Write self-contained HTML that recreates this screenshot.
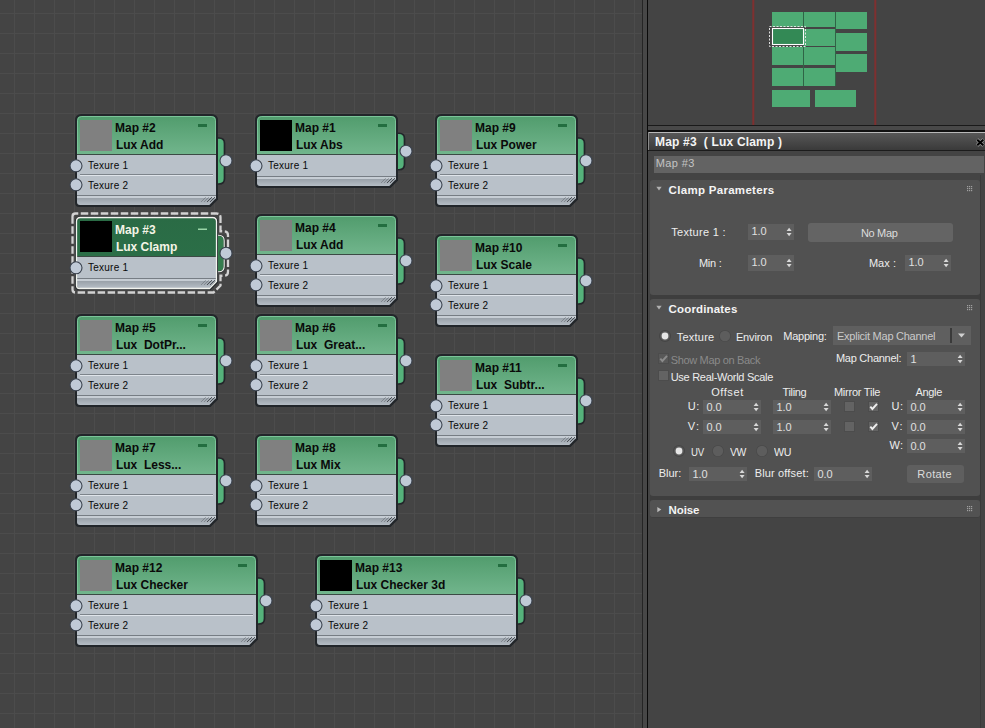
<!DOCTYPE html>
<html><head><meta charset="utf-8"><style>
*{margin:0;padding:0;box-sizing:border-box}
html,body{width:985px;height:728px;overflow:hidden;background:#444444;font-family:"Liberation Sans", sans-serif}
.a{position:absolute}
.sp{position:absolute;background:#5e5e5e;height:14px}
.rh{position:absolute;left:650px;width:330px;height:18px}
</style></head>
<body>
<svg class="a" style="left:0;top:0" width="642" height="728"><rect x="14" y="0" width="1" height="728" fill="#4c4c4c"/><rect x="34" y="0" width="1" height="728" fill="#4c4c4c"/><rect x="54" y="0" width="1" height="728" fill="#4c4c4c"/><rect x="74" y="0" width="1" height="728" fill="#4c4c4c"/><rect x="94" y="0" width="1" height="728" fill="#4c4c4c"/><rect x="114" y="0" width="1" height="728" fill="#4c4c4c"/><rect x="134" y="0" width="1" height="728" fill="#4c4c4c"/><rect x="154" y="0" width="1" height="728" fill="#4c4c4c"/><rect x="174" y="0" width="1" height="728" fill="#4c4c4c"/><rect x="194" y="0" width="1" height="728" fill="#4c4c4c"/><rect x="214" y="0" width="1" height="728" fill="#4c4c4c"/><rect x="234" y="0" width="1" height="728" fill="#4c4c4c"/><rect x="254" y="0" width="1" height="728" fill="#4c4c4c"/><rect x="274" y="0" width="1" height="728" fill="#4c4c4c"/><rect x="294" y="0" width="1" height="728" fill="#4c4c4c"/><rect x="314" y="0" width="1" height="728" fill="#4c4c4c"/><rect x="334" y="0" width="1" height="728" fill="#4c4c4c"/><rect x="354" y="0" width="1" height="728" fill="#4c4c4c"/><rect x="374" y="0" width="1" height="728" fill="#4c4c4c"/><rect x="394" y="0" width="1" height="728" fill="#4c4c4c"/><rect x="414" y="0" width="1" height="728" fill="#4c4c4c"/><rect x="434" y="0" width="1" height="728" fill="#4c4c4c"/><rect x="454" y="0" width="1" height="728" fill="#4c4c4c"/><rect x="474" y="0" width="1" height="728" fill="#4c4c4c"/><rect x="494" y="0" width="1" height="728" fill="#4c4c4c"/><rect x="514" y="0" width="1" height="728" fill="#4c4c4c"/><rect x="534" y="0" width="1" height="728" fill="#4c4c4c"/><rect x="554" y="0" width="1" height="728" fill="#4c4c4c"/><rect x="574" y="0" width="1" height="728" fill="#4c4c4c"/><rect x="594" y="0" width="1" height="728" fill="#4c4c4c"/><rect x="614" y="0" width="1" height="728" fill="#4c4c4c"/><rect x="634" y="0" width="1" height="728" fill="#4c4c4c"/><rect x="0" y="13" width="642" height="1" fill="#4c4c4c"/><rect x="0" y="33" width="642" height="1" fill="#4c4c4c"/><rect x="0" y="53" width="642" height="1" fill="#4c4c4c"/><rect x="0" y="73" width="642" height="1" fill="#4c4c4c"/><rect x="0" y="93" width="642" height="1" fill="#4c4c4c"/><rect x="0" y="113" width="642" height="1" fill="#4c4c4c"/><rect x="0" y="133" width="642" height="1" fill="#4c4c4c"/><rect x="0" y="153" width="642" height="1" fill="#4c4c4c"/><rect x="0" y="173" width="642" height="1" fill="#4c4c4c"/><rect x="0" y="193" width="642" height="1" fill="#4c4c4c"/><rect x="0" y="213" width="642" height="1" fill="#4c4c4c"/><rect x="0" y="233" width="642" height="1" fill="#4c4c4c"/><rect x="0" y="253" width="642" height="1" fill="#4c4c4c"/><rect x="0" y="273" width="642" height="1" fill="#4c4c4c"/><rect x="0" y="293" width="642" height="1" fill="#4c4c4c"/><rect x="0" y="313" width="642" height="1" fill="#4c4c4c"/><rect x="0" y="333" width="642" height="1" fill="#4c4c4c"/><rect x="0" y="353" width="642" height="1" fill="#4c4c4c"/><rect x="0" y="373" width="642" height="1" fill="#4c4c4c"/><rect x="0" y="393" width="642" height="1" fill="#4c4c4c"/><rect x="0" y="413" width="642" height="1" fill="#4c4c4c"/><rect x="0" y="433" width="642" height="1" fill="#4c4c4c"/><rect x="0" y="453" width="642" height="1" fill="#4c4c4c"/><rect x="0" y="473" width="642" height="1" fill="#4c4c4c"/><rect x="0" y="493" width="642" height="1" fill="#4c4c4c"/><rect x="0" y="513" width="642" height="1" fill="#4c4c4c"/><rect x="0" y="533" width="642" height="1" fill="#4c4c4c"/><rect x="0" y="553" width="642" height="1" fill="#4c4c4c"/><rect x="0" y="573" width="642" height="1" fill="#4c4c4c"/><rect x="0" y="593" width="642" height="1" fill="#4c4c4c"/><rect x="0" y="613" width="642" height="1" fill="#4c4c4c"/><rect x="0" y="633" width="642" height="1" fill="#4c4c4c"/><rect x="0" y="653" width="642" height="1" fill="#4c4c4c"/><rect x="0" y="673" width="642" height="1" fill="#4c4c4c"/><rect x="0" y="693" width="642" height="1" fill="#4c4c4c"/><rect x="0" y="713" width="642" height="1" fill="#4c4c4c"/></svg><svg style="position:absolute;left:65px;top:104px" width="177" height="113"><path d="M150,34.0 L154,34.0 Q159.5,34.0 159.5,39.5 L159.5,74.5 Q159.5,80.0 154,80.0 L150,80.0 Z" fill="#55b27b" stroke="#22262a" stroke-width="1.7"/><defs><clipPath id="c75_114"><path d="M12,16.5 Q12,12 16.5,12 L146.5,12 Q151,12 151,16.5 L151,94.3 L144.3,101 L15,101 Q12,101 12,98 Z"/></clipPath><linearGradient id="gc75_114" x1="0" y1="0" x2="0" y2="1"><stop offset="0" stop-color="#519c6d"/><stop offset="1" stop-color="#71b58c"/></linearGradient><linearGradient id="fc75_114" x1="0" y1="0" x2="0" y2="1"><stop offset="0" stop-color="#99a1a9"/><stop offset="1" stop-color="#b5bdc5"/></linearGradient></defs><path d="M10,16.5 Q10,10 16.5,10 L146.5,10 Q153,10 153,16.5 L153,95.5 L145.5,103 L14.5,103 Q10,103 10,98.5 Z" fill="#22262a"/><g clip-path="url(#c75_114)"><rect x="12" y="12" width="139" height="38" fill="url(#gc75_114)"/><path d="M12.5,50 L12.5,16.5 Q12.5,12.5 16.5,12.5 L146.5,12.5 Q150.5,12.5 150.5,16.5 L150.5,50" fill="none" stroke="#7bc499" stroke-width="1"/><rect x="12" y="50" width="139" height="1" fill="#3b4a44"/><rect x="12" y="51" width="139" height="41" fill="#b9c1c9"/><rect x="15" y="70" width="133" height="1" fill="#7d848b"/><rect x="15" y="71" width="133" height="1" fill="#dfe4ea"/><rect x="12" y="91" width="139" height="1" fill="#767d84"/><rect x="12" y="92" width="139" height="2" fill="#c6cdd4"/><rect x="12" y="94" width="139" height="7" fill="url(#fc75_114)"/></g><line x1="136" y1="98" x2="141" y2="93" stroke="#1c1f22" stroke-width="1" stroke-dasharray="1 0.5" opacity="0.35"/><line x1="139" y1="98" x2="144" y2="93" stroke="#1c1f22" stroke-width="1" stroke-dasharray="1 0.5" opacity="0.35"/><line x1="142" y1="98" x2="147" y2="93" stroke="#1c1f22" stroke-width="1" stroke-dasharray="1 0.5" opacity="0.9"/><line x1="145" y1="98" x2="150" y2="93" stroke="#1c1f22" stroke-width="1" stroke-dasharray="1 0.5" opacity="0.9"/><rect x="15" y="16" width="32" height="31" fill="#808080"/><rect x="133" y="20" width="9" height="3" fill="#236e40"/><circle cx="11" cy="61.8" r="6" fill="#c0cad7" stroke="#3a424e" stroke-width="1.1"/><circle cx="11" cy="80.8" r="6" fill="#c0cad7" stroke="#3a424e" stroke-width="1.1"/><circle cx="161" cy="56.7" r="6" fill="#c0cad7" stroke="#3a424e" stroke-width="1.1"/></svg><div class="a" style="left:115.00px;top:122px;font-size:12px;font-weight:bold;color:#0a0a0a;line-height:12px;white-space:pre;letter-spacing:0.000px;">Map #2</div><div class="a" style="left:115.90px;top:139px;font-size:12px;font-weight:bold;color:#0a0a0a;line-height:12px;white-space:pre;letter-spacing:0.000px;">Lux Add</div><div class="a" style="left:88.10px;top:160px;font-size:10px;font-weight:normal;color:#080808;line-height:12px;white-space:pre;letter-spacing:0.221px;">Texure 1</div><div class="a" style="left:88.10px;top:180px;font-size:10px;font-weight:normal;color:#080808;line-height:12px;white-space:pre;letter-spacing:0.221px;">Texure 2</div><svg style="position:absolute;left:245px;top:104px" width="177" height="94"><path d="M150,29.25 L154,29.25 Q159.5,29.25 159.5,34.75 L159.5,60.25 Q159.5,65.75 154,65.75 L150,65.75 Z" fill="#55b27b" stroke="#22262a" stroke-width="1.7"/><defs><clipPath id="c255_114"><path d="M12,16.5 Q12,12 16.5,12 L146.5,12 Q151,12 151,16.5 L151,75.3 L144.3,82 L15,82 Q12,82 12,79 Z"/></clipPath><linearGradient id="gc255_114" x1="0" y1="0" x2="0" y2="1"><stop offset="0" stop-color="#519c6d"/><stop offset="1" stop-color="#71b58c"/></linearGradient><linearGradient id="fc255_114" x1="0" y1="0" x2="0" y2="1"><stop offset="0" stop-color="#99a1a9"/><stop offset="1" stop-color="#b5bdc5"/></linearGradient></defs><path d="M10,16.5 Q10,10 16.5,10 L146.5,10 Q153,10 153,16.5 L153,76.5 L145.5,84 L14.5,84 Q10,84 10,79.5 Z" fill="#22262a"/><g clip-path="url(#c255_114)"><rect x="12" y="12" width="139" height="38" fill="url(#gc255_114)"/><path d="M12.5,50 L12.5,16.5 Q12.5,12.5 16.5,12.5 L146.5,12.5 Q150.5,12.5 150.5,16.5 L150.5,50" fill="none" stroke="#7bc499" stroke-width="1"/><rect x="12" y="50" width="139" height="1" fill="#3b4a44"/><rect x="12" y="51" width="139" height="21" fill="#b9c1c9"/><rect x="12" y="72" width="139" height="1" fill="#767d84"/><rect x="12" y="73" width="139" height="2" fill="#c6cdd4"/><rect x="12" y="75" width="139" height="7" fill="url(#fc255_114)"/></g><line x1="136" y1="79" x2="141" y2="74" stroke="#1c1f22" stroke-width="1" stroke-dasharray="1 0.5" opacity="0.35"/><line x1="139" y1="79" x2="144" y2="74" stroke="#1c1f22" stroke-width="1" stroke-dasharray="1 0.5" opacity="0.35"/><line x1="142" y1="79" x2="147" y2="74" stroke="#1c1f22" stroke-width="1" stroke-dasharray="1 0.5" opacity="0.9"/><line x1="145" y1="79" x2="150" y2="74" stroke="#1c1f22" stroke-width="1" stroke-dasharray="1 0.5" opacity="0.9"/><rect x="15" y="16" width="32" height="31" fill="#000000"/><rect x="133" y="20" width="9" height="3" fill="#236e40"/><circle cx="11" cy="61.8" r="6" fill="#c0cad7" stroke="#3a424e" stroke-width="1.1"/><circle cx="161" cy="47.2" r="6" fill="#c0cad7" stroke="#3a424e" stroke-width="1.1"/></svg><div class="a" style="left:295.00px;top:122px;font-size:12px;font-weight:bold;color:#0a0a0a;line-height:12px;white-space:pre;letter-spacing:0.000px;">Map #1</div><div class="a" style="left:295.90px;top:139px;font-size:12px;font-weight:bold;color:#0a0a0a;line-height:12px;white-space:pre;letter-spacing:0.000px;">Lux Abs</div><div class="a" style="left:268.10px;top:160px;font-size:10px;font-weight:normal;color:#080808;line-height:12px;white-space:pre;letter-spacing:0.221px;">Texure 1</div><svg style="position:absolute;left:425px;top:104px" width="177" height="113"><path d="M150,34.0 L154,34.0 Q159.5,34.0 159.5,39.5 L159.5,74.5 Q159.5,80.0 154,80.0 L150,80.0 Z" fill="#55b27b" stroke="#22262a" stroke-width="1.7"/><defs><clipPath id="c435_114"><path d="M12,16.5 Q12,12 16.5,12 L146.5,12 Q151,12 151,16.5 L151,94.3 L144.3,101 L15,101 Q12,101 12,98 Z"/></clipPath><linearGradient id="gc435_114" x1="0" y1="0" x2="0" y2="1"><stop offset="0" stop-color="#519c6d"/><stop offset="1" stop-color="#71b58c"/></linearGradient><linearGradient id="fc435_114" x1="0" y1="0" x2="0" y2="1"><stop offset="0" stop-color="#99a1a9"/><stop offset="1" stop-color="#b5bdc5"/></linearGradient></defs><path d="M10,16.5 Q10,10 16.5,10 L146.5,10 Q153,10 153,16.5 L153,95.5 L145.5,103 L14.5,103 Q10,103 10,98.5 Z" fill="#22262a"/><g clip-path="url(#c435_114)"><rect x="12" y="12" width="139" height="38" fill="url(#gc435_114)"/><path d="M12.5,50 L12.5,16.5 Q12.5,12.5 16.5,12.5 L146.5,12.5 Q150.5,12.5 150.5,16.5 L150.5,50" fill="none" stroke="#7bc499" stroke-width="1"/><rect x="12" y="50" width="139" height="1" fill="#3b4a44"/><rect x="12" y="51" width="139" height="41" fill="#b9c1c9"/><rect x="15" y="70" width="133" height="1" fill="#7d848b"/><rect x="15" y="71" width="133" height="1" fill="#dfe4ea"/><rect x="12" y="91" width="139" height="1" fill="#767d84"/><rect x="12" y="92" width="139" height="2" fill="#c6cdd4"/><rect x="12" y="94" width="139" height="7" fill="url(#fc435_114)"/></g><line x1="136" y1="98" x2="141" y2="93" stroke="#1c1f22" stroke-width="1" stroke-dasharray="1 0.5" opacity="0.35"/><line x1="139" y1="98" x2="144" y2="93" stroke="#1c1f22" stroke-width="1" stroke-dasharray="1 0.5" opacity="0.35"/><line x1="142" y1="98" x2="147" y2="93" stroke="#1c1f22" stroke-width="1" stroke-dasharray="1 0.5" opacity="0.9"/><line x1="145" y1="98" x2="150" y2="93" stroke="#1c1f22" stroke-width="1" stroke-dasharray="1 0.5" opacity="0.9"/><rect x="15" y="16" width="32" height="31" fill="#808080"/><rect x="133" y="20" width="9" height="3" fill="#236e40"/><circle cx="11" cy="61.8" r="6" fill="#c0cad7" stroke="#3a424e" stroke-width="1.1"/><circle cx="11" cy="80.8" r="6" fill="#c0cad7" stroke="#3a424e" stroke-width="1.1"/><circle cx="161" cy="56.7" r="6" fill="#c0cad7" stroke="#3a424e" stroke-width="1.1"/></svg><div class="a" style="left:475.00px;top:122px;font-size:12px;font-weight:bold;color:#0a0a0a;line-height:12px;white-space:pre;letter-spacing:0.000px;">Map #9</div><div class="a" style="left:475.90px;top:139px;font-size:12px;font-weight:bold;color:#0a0a0a;line-height:12px;white-space:pre;letter-spacing:0.000px;">Lux Power</div><div class="a" style="left:448.10px;top:160px;font-size:10px;font-weight:normal;color:#080808;line-height:12px;white-space:pre;letter-spacing:0.221px;">Texure 1</div><div class="a" style="left:448.10px;top:180px;font-size:10px;font-weight:normal;color:#080808;line-height:12px;white-space:pre;letter-spacing:0.221px;">Texure 2</div><svg style="position:absolute;left:65px;top:206px" width="177" height="94"><path d="M7.5,10.5 Q7.5,7.5 10.5,7.5 L151.5,7.5 Q155.5,7.5 155.5,11.5 L155.5,25.25 L159,25.25 Q163,25.25 163,29.25 L163,65.75 Q163,69.75 159,69.75 L155.5,69.75 L155.5,79.5 L148.5,86.5 L10.5,86.5 Q7.5,86.5 7.5,83.5 Z" fill="none" stroke="#d2d2d2" stroke-width="2.3" stroke-dasharray="7.5 2.5"/><path d="M150,29.25 L154,29.25 Q159.5,29.25 159.5,34.75 L159.5,60.25 Q159.5,65.75 154,65.75 L150,65.75 Z" fill="#357d4e" stroke="#22262a" stroke-width="1.7"/><path d="M150,29.25 L154,29.25 Q159.5,29.25 159.5,34.75 L159.5,60.25 Q159.5,65.75 154,65.75 L150,65.75 Z" fill="none" stroke="#eef2ec" stroke-width="1.1" transform="translate(-0.3,0)"/><defs><clipPath id="c75_216"><path d="M12,16.5 Q12,12 16.5,12 L146.5,12 Q151,12 151,16.5 L151,75.3 L144.3,82 L15,82 Q12,82 12,79 Z"/></clipPath><linearGradient id="gc75_216" x1="0" y1="0" x2="0" y2="1"><stop offset="0" stop-color="#2a6b45"/><stop offset="1" stop-color="#2b6e47"/></linearGradient><linearGradient id="fc75_216" x1="0" y1="0" x2="0" y2="1"><stop offset="0" stop-color="#99a1a9"/><stop offset="1" stop-color="#b5bdc5"/></linearGradient></defs><path d="M10,16.5 Q10,10 16.5,10 L146.5,10 Q153,10 153,16.5 L153,76.5 L145.5,84 L14.5,84 Q10,84 10,79.5 Z" fill="#22262a"/><g clip-path="url(#c75_216)"><rect x="12" y="12" width="139" height="38" fill="url(#gc75_216)"/><rect x="12" y="50" width="139" height="1" fill="#3b4a44"/><rect x="12" y="51" width="139" height="21" fill="#b9c1c9"/><rect x="12" y="72" width="139" height="1" fill="#767d84"/><rect x="12" y="73" width="139" height="2" fill="#c6cdd4"/><rect x="12" y="75" width="139" height="7" fill="url(#fc75_216)"/></g><path d="M11.5,15.5 Q11.5,11.5 15.5,11.5 L147.5,11.5 Q151.5,11.5 151.5,15.5 L151.5,75.5 L144.5,82.5 L14.5,82.5 Q11.5,82.5 11.5,79.5 Z" fill="none" stroke="#f2f4ef" stroke-width="1.3"/><line x1="136" y1="79" x2="141" y2="74" stroke="#1c1f22" stroke-width="1" stroke-dasharray="1 0.5" opacity="0.35"/><line x1="139" y1="79" x2="144" y2="74" stroke="#1c1f22" stroke-width="1" stroke-dasharray="1 0.5" opacity="0.35"/><line x1="142" y1="79" x2="147" y2="74" stroke="#1c1f22" stroke-width="1" stroke-dasharray="1 0.5" opacity="0.9"/><line x1="145" y1="79" x2="150" y2="74" stroke="#1c1f22" stroke-width="1" stroke-dasharray="1 0.5" opacity="0.9"/><rect x="15" y="15" width="32" height="31" fill="#000000"/><rect x="133" y="22.5" width="9" height="1.5" fill="#9ad6a8"/><circle cx="11" cy="61.8" r="6" fill="#c0cad7" stroke="#3a424e" stroke-width="1.1"/><circle cx="161" cy="47.2" r="6" fill="#c0cad7" stroke="#3a424e" stroke-width="1.1"/></svg><div class="a" style="left:115.00px;top:224px;font-size:12px;font-weight:bold;color:#f4f4e6;line-height:12px;white-space:pre;letter-spacing:0.000px;">Map #3</div><div class="a" style="left:115.90px;top:241px;font-size:12px;font-weight:bold;color:#f4f4e6;line-height:12px;white-space:pre;letter-spacing:0.000px;">Lux Clamp</div><div class="a" style="left:88.10px;top:262px;font-size:10px;font-weight:normal;color:#080808;line-height:12px;white-space:pre;letter-spacing:0.221px;">Texure 1</div><svg style="position:absolute;left:245px;top:204px" width="177" height="113"><path d="M150,34.0 L154,34.0 Q159.5,34.0 159.5,39.5 L159.5,74.5 Q159.5,80.0 154,80.0 L150,80.0 Z" fill="#55b27b" stroke="#22262a" stroke-width="1.7"/><defs><clipPath id="c255_214"><path d="M12,16.5 Q12,12 16.5,12 L146.5,12 Q151,12 151,16.5 L151,94.3 L144.3,101 L15,101 Q12,101 12,98 Z"/></clipPath><linearGradient id="gc255_214" x1="0" y1="0" x2="0" y2="1"><stop offset="0" stop-color="#519c6d"/><stop offset="1" stop-color="#71b58c"/></linearGradient><linearGradient id="fc255_214" x1="0" y1="0" x2="0" y2="1"><stop offset="0" stop-color="#99a1a9"/><stop offset="1" stop-color="#b5bdc5"/></linearGradient></defs><path d="M10,16.5 Q10,10 16.5,10 L146.5,10 Q153,10 153,16.5 L153,95.5 L145.5,103 L14.5,103 Q10,103 10,98.5 Z" fill="#22262a"/><g clip-path="url(#c255_214)"><rect x="12" y="12" width="139" height="38" fill="url(#gc255_214)"/><path d="M12.5,50 L12.5,16.5 Q12.5,12.5 16.5,12.5 L146.5,12.5 Q150.5,12.5 150.5,16.5 L150.5,50" fill="none" stroke="#7bc499" stroke-width="1"/><rect x="12" y="50" width="139" height="1" fill="#3b4a44"/><rect x="12" y="51" width="139" height="41" fill="#b9c1c9"/><rect x="15" y="70" width="133" height="1" fill="#7d848b"/><rect x="15" y="71" width="133" height="1" fill="#dfe4ea"/><rect x="12" y="91" width="139" height="1" fill="#767d84"/><rect x="12" y="92" width="139" height="2" fill="#c6cdd4"/><rect x="12" y="94" width="139" height="7" fill="url(#fc255_214)"/></g><line x1="136" y1="98" x2="141" y2="93" stroke="#1c1f22" stroke-width="1" stroke-dasharray="1 0.5" opacity="0.35"/><line x1="139" y1="98" x2="144" y2="93" stroke="#1c1f22" stroke-width="1" stroke-dasharray="1 0.5" opacity="0.35"/><line x1="142" y1="98" x2="147" y2="93" stroke="#1c1f22" stroke-width="1" stroke-dasharray="1 0.5" opacity="0.9"/><line x1="145" y1="98" x2="150" y2="93" stroke="#1c1f22" stroke-width="1" stroke-dasharray="1 0.5" opacity="0.9"/><rect x="15" y="16" width="32" height="31" fill="#808080"/><rect x="133" y="20" width="9" height="3" fill="#236e40"/><circle cx="11" cy="61.8" r="6" fill="#c0cad7" stroke="#3a424e" stroke-width="1.1"/><circle cx="11" cy="80.8" r="6" fill="#c0cad7" stroke="#3a424e" stroke-width="1.1"/><circle cx="161" cy="56.7" r="6" fill="#c0cad7" stroke="#3a424e" stroke-width="1.1"/></svg><div class="a" style="left:295.00px;top:222px;font-size:12px;font-weight:bold;color:#0a0a0a;line-height:12px;white-space:pre;letter-spacing:0.000px;">Map #4</div><div class="a" style="left:295.90px;top:239px;font-size:12px;font-weight:bold;color:#0a0a0a;line-height:12px;white-space:pre;letter-spacing:0.000px;">Lux Add</div><div class="a" style="left:268.10px;top:260px;font-size:10px;font-weight:normal;color:#080808;line-height:12px;white-space:pre;letter-spacing:0.221px;">Texure 1</div><div class="a" style="left:268.10px;top:280px;font-size:10px;font-weight:normal;color:#080808;line-height:12px;white-space:pre;letter-spacing:0.221px;">Texure 2</div><svg style="position:absolute;left:425px;top:224px" width="177" height="113"><path d="M150,34.0 L154,34.0 Q159.5,34.0 159.5,39.5 L159.5,74.5 Q159.5,80.0 154,80.0 L150,80.0 Z" fill="#55b27b" stroke="#22262a" stroke-width="1.7"/><defs><clipPath id="c435_234"><path d="M12,16.5 Q12,12 16.5,12 L146.5,12 Q151,12 151,16.5 L151,94.3 L144.3,101 L15,101 Q12,101 12,98 Z"/></clipPath><linearGradient id="gc435_234" x1="0" y1="0" x2="0" y2="1"><stop offset="0" stop-color="#519c6d"/><stop offset="1" stop-color="#71b58c"/></linearGradient><linearGradient id="fc435_234" x1="0" y1="0" x2="0" y2="1"><stop offset="0" stop-color="#99a1a9"/><stop offset="1" stop-color="#b5bdc5"/></linearGradient></defs><path d="M10,16.5 Q10,10 16.5,10 L146.5,10 Q153,10 153,16.5 L153,95.5 L145.5,103 L14.5,103 Q10,103 10,98.5 Z" fill="#22262a"/><g clip-path="url(#c435_234)"><rect x="12" y="12" width="139" height="38" fill="url(#gc435_234)"/><path d="M12.5,50 L12.5,16.5 Q12.5,12.5 16.5,12.5 L146.5,12.5 Q150.5,12.5 150.5,16.5 L150.5,50" fill="none" stroke="#7bc499" stroke-width="1"/><rect x="12" y="50" width="139" height="1" fill="#3b4a44"/><rect x="12" y="51" width="139" height="41" fill="#b9c1c9"/><rect x="15" y="70" width="133" height="1" fill="#7d848b"/><rect x="15" y="71" width="133" height="1" fill="#dfe4ea"/><rect x="12" y="91" width="139" height="1" fill="#767d84"/><rect x="12" y="92" width="139" height="2" fill="#c6cdd4"/><rect x="12" y="94" width="139" height="7" fill="url(#fc435_234)"/></g><line x1="136" y1="98" x2="141" y2="93" stroke="#1c1f22" stroke-width="1" stroke-dasharray="1 0.5" opacity="0.35"/><line x1="139" y1="98" x2="144" y2="93" stroke="#1c1f22" stroke-width="1" stroke-dasharray="1 0.5" opacity="0.35"/><line x1="142" y1="98" x2="147" y2="93" stroke="#1c1f22" stroke-width="1" stroke-dasharray="1 0.5" opacity="0.9"/><line x1="145" y1="98" x2="150" y2="93" stroke="#1c1f22" stroke-width="1" stroke-dasharray="1 0.5" opacity="0.9"/><rect x="15" y="16" width="32" height="31" fill="#808080"/><rect x="133" y="20" width="9" height="3" fill="#236e40"/><circle cx="11" cy="61.8" r="6" fill="#c0cad7" stroke="#3a424e" stroke-width="1.1"/><circle cx="11" cy="80.8" r="6" fill="#c0cad7" stroke="#3a424e" stroke-width="1.1"/><circle cx="161" cy="56.7" r="6" fill="#c0cad7" stroke="#3a424e" stroke-width="1.1"/></svg><div class="a" style="left:475.00px;top:242px;font-size:12px;font-weight:bold;color:#0a0a0a;line-height:12px;white-space:pre;letter-spacing:0.000px;">Map #10</div><div class="a" style="left:475.90px;top:259px;font-size:12px;font-weight:bold;color:#0a0a0a;line-height:12px;white-space:pre;letter-spacing:0.000px;">Lux Scale</div><div class="a" style="left:448.10px;top:280px;font-size:10px;font-weight:normal;color:#080808;line-height:12px;white-space:pre;letter-spacing:0.221px;">Texure 1</div><div class="a" style="left:448.10px;top:300px;font-size:10px;font-weight:normal;color:#080808;line-height:12px;white-space:pre;letter-spacing:0.221px;">Texure 2</div><svg style="position:absolute;left:65px;top:304px" width="177" height="113"><path d="M150,34.0 L154,34.0 Q159.5,34.0 159.5,39.5 L159.5,74.5 Q159.5,80.0 154,80.0 L150,80.0 Z" fill="#55b27b" stroke="#22262a" stroke-width="1.7"/><defs><clipPath id="c75_314"><path d="M12,16.5 Q12,12 16.5,12 L146.5,12 Q151,12 151,16.5 L151,94.3 L144.3,101 L15,101 Q12,101 12,98 Z"/></clipPath><linearGradient id="gc75_314" x1="0" y1="0" x2="0" y2="1"><stop offset="0" stop-color="#519c6d"/><stop offset="1" stop-color="#71b58c"/></linearGradient><linearGradient id="fc75_314" x1="0" y1="0" x2="0" y2="1"><stop offset="0" stop-color="#99a1a9"/><stop offset="1" stop-color="#b5bdc5"/></linearGradient></defs><path d="M10,16.5 Q10,10 16.5,10 L146.5,10 Q153,10 153,16.5 L153,95.5 L145.5,103 L14.5,103 Q10,103 10,98.5 Z" fill="#22262a"/><g clip-path="url(#c75_314)"><rect x="12" y="12" width="139" height="38" fill="url(#gc75_314)"/><path d="M12.5,50 L12.5,16.5 Q12.5,12.5 16.5,12.5 L146.5,12.5 Q150.5,12.5 150.5,16.5 L150.5,50" fill="none" stroke="#7bc499" stroke-width="1"/><rect x="12" y="50" width="139" height="1" fill="#3b4a44"/><rect x="12" y="51" width="139" height="41" fill="#b9c1c9"/><rect x="15" y="70" width="133" height="1" fill="#7d848b"/><rect x="15" y="71" width="133" height="1" fill="#dfe4ea"/><rect x="12" y="91" width="139" height="1" fill="#767d84"/><rect x="12" y="92" width="139" height="2" fill="#c6cdd4"/><rect x="12" y="94" width="139" height="7" fill="url(#fc75_314)"/></g><line x1="136" y1="98" x2="141" y2="93" stroke="#1c1f22" stroke-width="1" stroke-dasharray="1 0.5" opacity="0.35"/><line x1="139" y1="98" x2="144" y2="93" stroke="#1c1f22" stroke-width="1" stroke-dasharray="1 0.5" opacity="0.35"/><line x1="142" y1="98" x2="147" y2="93" stroke="#1c1f22" stroke-width="1" stroke-dasharray="1 0.5" opacity="0.9"/><line x1="145" y1="98" x2="150" y2="93" stroke="#1c1f22" stroke-width="1" stroke-dasharray="1 0.5" opacity="0.9"/><rect x="15" y="16" width="32" height="31" fill="#808080"/><rect x="133" y="20" width="9" height="3" fill="#236e40"/><circle cx="11" cy="61.8" r="6" fill="#c0cad7" stroke="#3a424e" stroke-width="1.1"/><circle cx="11" cy="80.8" r="6" fill="#c0cad7" stroke="#3a424e" stroke-width="1.1"/><circle cx="161" cy="56.7" r="6" fill="#c0cad7" stroke="#3a424e" stroke-width="1.1"/></svg><div class="a" style="left:115.00px;top:322px;font-size:12px;font-weight:bold;color:#0a0a0a;line-height:12px;white-space:pre;letter-spacing:0.000px;">Map #5</div><div class="a" style="left:115.90px;top:339px;font-size:12px;font-weight:bold;color:#0a0a0a;line-height:12px;white-space:pre;letter-spacing:0.000px;">Lux&#160;&#160;DotPr...</div><div class="a" style="left:88.10px;top:360px;font-size:10px;font-weight:normal;color:#080808;line-height:12px;white-space:pre;letter-spacing:0.221px;">Texure 1</div><div class="a" style="left:88.10px;top:380px;font-size:10px;font-weight:normal;color:#080808;line-height:12px;white-space:pre;letter-spacing:0.221px;">Texure 2</div><svg style="position:absolute;left:245px;top:304px" width="177" height="113"><path d="M150,34.0 L154,34.0 Q159.5,34.0 159.5,39.5 L159.5,74.5 Q159.5,80.0 154,80.0 L150,80.0 Z" fill="#55b27b" stroke="#22262a" stroke-width="1.7"/><defs><clipPath id="c255_314"><path d="M12,16.5 Q12,12 16.5,12 L146.5,12 Q151,12 151,16.5 L151,94.3 L144.3,101 L15,101 Q12,101 12,98 Z"/></clipPath><linearGradient id="gc255_314" x1="0" y1="0" x2="0" y2="1"><stop offset="0" stop-color="#519c6d"/><stop offset="1" stop-color="#71b58c"/></linearGradient><linearGradient id="fc255_314" x1="0" y1="0" x2="0" y2="1"><stop offset="0" stop-color="#99a1a9"/><stop offset="1" stop-color="#b5bdc5"/></linearGradient></defs><path d="M10,16.5 Q10,10 16.5,10 L146.5,10 Q153,10 153,16.5 L153,95.5 L145.5,103 L14.5,103 Q10,103 10,98.5 Z" fill="#22262a"/><g clip-path="url(#c255_314)"><rect x="12" y="12" width="139" height="38" fill="url(#gc255_314)"/><path d="M12.5,50 L12.5,16.5 Q12.5,12.5 16.5,12.5 L146.5,12.5 Q150.5,12.5 150.5,16.5 L150.5,50" fill="none" stroke="#7bc499" stroke-width="1"/><rect x="12" y="50" width="139" height="1" fill="#3b4a44"/><rect x="12" y="51" width="139" height="41" fill="#b9c1c9"/><rect x="15" y="70" width="133" height="1" fill="#7d848b"/><rect x="15" y="71" width="133" height="1" fill="#dfe4ea"/><rect x="12" y="91" width="139" height="1" fill="#767d84"/><rect x="12" y="92" width="139" height="2" fill="#c6cdd4"/><rect x="12" y="94" width="139" height="7" fill="url(#fc255_314)"/></g><line x1="136" y1="98" x2="141" y2="93" stroke="#1c1f22" stroke-width="1" stroke-dasharray="1 0.5" opacity="0.35"/><line x1="139" y1="98" x2="144" y2="93" stroke="#1c1f22" stroke-width="1" stroke-dasharray="1 0.5" opacity="0.35"/><line x1="142" y1="98" x2="147" y2="93" stroke="#1c1f22" stroke-width="1" stroke-dasharray="1 0.5" opacity="0.9"/><line x1="145" y1="98" x2="150" y2="93" stroke="#1c1f22" stroke-width="1" stroke-dasharray="1 0.5" opacity="0.9"/><rect x="15" y="16" width="32" height="31" fill="#808080"/><rect x="133" y="20" width="9" height="3" fill="#236e40"/><circle cx="11" cy="61.8" r="6" fill="#c0cad7" stroke="#3a424e" stroke-width="1.1"/><circle cx="11" cy="80.8" r="6" fill="#c0cad7" stroke="#3a424e" stroke-width="1.1"/><circle cx="161" cy="56.7" r="6" fill="#c0cad7" stroke="#3a424e" stroke-width="1.1"/></svg><div class="a" style="left:295.00px;top:322px;font-size:12px;font-weight:bold;color:#0a0a0a;line-height:12px;white-space:pre;letter-spacing:0.000px;">Map #6</div><div class="a" style="left:295.90px;top:339px;font-size:12px;font-weight:bold;color:#0a0a0a;line-height:12px;white-space:pre;letter-spacing:0.000px;">Lux&#160;&#160;Great...</div><div class="a" style="left:268.10px;top:360px;font-size:10px;font-weight:normal;color:#080808;line-height:12px;white-space:pre;letter-spacing:0.221px;">Texure 1</div><div class="a" style="left:268.10px;top:380px;font-size:10px;font-weight:normal;color:#080808;line-height:12px;white-space:pre;letter-spacing:0.221px;">Texure 2</div><svg style="position:absolute;left:425px;top:344px" width="177" height="113"><path d="M150,34.0 L154,34.0 Q159.5,34.0 159.5,39.5 L159.5,74.5 Q159.5,80.0 154,80.0 L150,80.0 Z" fill="#55b27b" stroke="#22262a" stroke-width="1.7"/><defs><clipPath id="c435_354"><path d="M12,16.5 Q12,12 16.5,12 L146.5,12 Q151,12 151,16.5 L151,94.3 L144.3,101 L15,101 Q12,101 12,98 Z"/></clipPath><linearGradient id="gc435_354" x1="0" y1="0" x2="0" y2="1"><stop offset="0" stop-color="#519c6d"/><stop offset="1" stop-color="#71b58c"/></linearGradient><linearGradient id="fc435_354" x1="0" y1="0" x2="0" y2="1"><stop offset="0" stop-color="#99a1a9"/><stop offset="1" stop-color="#b5bdc5"/></linearGradient></defs><path d="M10,16.5 Q10,10 16.5,10 L146.5,10 Q153,10 153,16.5 L153,95.5 L145.5,103 L14.5,103 Q10,103 10,98.5 Z" fill="#22262a"/><g clip-path="url(#c435_354)"><rect x="12" y="12" width="139" height="38" fill="url(#gc435_354)"/><path d="M12.5,50 L12.5,16.5 Q12.5,12.5 16.5,12.5 L146.5,12.5 Q150.5,12.5 150.5,16.5 L150.5,50" fill="none" stroke="#7bc499" stroke-width="1"/><rect x="12" y="50" width="139" height="1" fill="#3b4a44"/><rect x="12" y="51" width="139" height="41" fill="#b9c1c9"/><rect x="15" y="70" width="133" height="1" fill="#7d848b"/><rect x="15" y="71" width="133" height="1" fill="#dfe4ea"/><rect x="12" y="91" width="139" height="1" fill="#767d84"/><rect x="12" y="92" width="139" height="2" fill="#c6cdd4"/><rect x="12" y="94" width="139" height="7" fill="url(#fc435_354)"/></g><line x1="136" y1="98" x2="141" y2="93" stroke="#1c1f22" stroke-width="1" stroke-dasharray="1 0.5" opacity="0.35"/><line x1="139" y1="98" x2="144" y2="93" stroke="#1c1f22" stroke-width="1" stroke-dasharray="1 0.5" opacity="0.35"/><line x1="142" y1="98" x2="147" y2="93" stroke="#1c1f22" stroke-width="1" stroke-dasharray="1 0.5" opacity="0.9"/><line x1="145" y1="98" x2="150" y2="93" stroke="#1c1f22" stroke-width="1" stroke-dasharray="1 0.5" opacity="0.9"/><rect x="15" y="16" width="32" height="31" fill="#808080"/><rect x="133" y="20" width="9" height="3" fill="#236e40"/><circle cx="11" cy="61.8" r="6" fill="#c0cad7" stroke="#3a424e" stroke-width="1.1"/><circle cx="11" cy="80.8" r="6" fill="#c0cad7" stroke="#3a424e" stroke-width="1.1"/><circle cx="161" cy="56.7" r="6" fill="#c0cad7" stroke="#3a424e" stroke-width="1.1"/></svg><div class="a" style="left:475.00px;top:362px;font-size:12px;font-weight:bold;color:#0a0a0a;line-height:12px;white-space:pre;letter-spacing:0.000px;">Map #11</div><div class="a" style="left:475.90px;top:379px;font-size:12px;font-weight:bold;color:#0a0a0a;line-height:12px;white-space:pre;letter-spacing:0.000px;">Lux&#160;&#160;Subtr...</div><div class="a" style="left:448.10px;top:400px;font-size:10px;font-weight:normal;color:#080808;line-height:12px;white-space:pre;letter-spacing:0.221px;">Texure 1</div><div class="a" style="left:448.10px;top:420px;font-size:10px;font-weight:normal;color:#080808;line-height:12px;white-space:pre;letter-spacing:0.221px;">Texure 2</div><svg style="position:absolute;left:65px;top:424px" width="177" height="113"><path d="M150,34.0 L154,34.0 Q159.5,34.0 159.5,39.5 L159.5,74.5 Q159.5,80.0 154,80.0 L150,80.0 Z" fill="#55b27b" stroke="#22262a" stroke-width="1.7"/><defs><clipPath id="c75_434"><path d="M12,16.5 Q12,12 16.5,12 L146.5,12 Q151,12 151,16.5 L151,94.3 L144.3,101 L15,101 Q12,101 12,98 Z"/></clipPath><linearGradient id="gc75_434" x1="0" y1="0" x2="0" y2="1"><stop offset="0" stop-color="#519c6d"/><stop offset="1" stop-color="#71b58c"/></linearGradient><linearGradient id="fc75_434" x1="0" y1="0" x2="0" y2="1"><stop offset="0" stop-color="#99a1a9"/><stop offset="1" stop-color="#b5bdc5"/></linearGradient></defs><path d="M10,16.5 Q10,10 16.5,10 L146.5,10 Q153,10 153,16.5 L153,95.5 L145.5,103 L14.5,103 Q10,103 10,98.5 Z" fill="#22262a"/><g clip-path="url(#c75_434)"><rect x="12" y="12" width="139" height="38" fill="url(#gc75_434)"/><path d="M12.5,50 L12.5,16.5 Q12.5,12.5 16.5,12.5 L146.5,12.5 Q150.5,12.5 150.5,16.5 L150.5,50" fill="none" stroke="#7bc499" stroke-width="1"/><rect x="12" y="50" width="139" height="1" fill="#3b4a44"/><rect x="12" y="51" width="139" height="41" fill="#b9c1c9"/><rect x="15" y="70" width="133" height="1" fill="#7d848b"/><rect x="15" y="71" width="133" height="1" fill="#dfe4ea"/><rect x="12" y="91" width="139" height="1" fill="#767d84"/><rect x="12" y="92" width="139" height="2" fill="#c6cdd4"/><rect x="12" y="94" width="139" height="7" fill="url(#fc75_434)"/></g><line x1="136" y1="98" x2="141" y2="93" stroke="#1c1f22" stroke-width="1" stroke-dasharray="1 0.5" opacity="0.35"/><line x1="139" y1="98" x2="144" y2="93" stroke="#1c1f22" stroke-width="1" stroke-dasharray="1 0.5" opacity="0.35"/><line x1="142" y1="98" x2="147" y2="93" stroke="#1c1f22" stroke-width="1" stroke-dasharray="1 0.5" opacity="0.9"/><line x1="145" y1="98" x2="150" y2="93" stroke="#1c1f22" stroke-width="1" stroke-dasharray="1 0.5" opacity="0.9"/><rect x="15" y="16" width="32" height="31" fill="#808080"/><rect x="133" y="20" width="9" height="3" fill="#236e40"/><circle cx="11" cy="61.8" r="6" fill="#c0cad7" stroke="#3a424e" stroke-width="1.1"/><circle cx="11" cy="80.8" r="6" fill="#c0cad7" stroke="#3a424e" stroke-width="1.1"/><circle cx="161" cy="56.7" r="6" fill="#c0cad7" stroke="#3a424e" stroke-width="1.1"/></svg><div class="a" style="left:115.00px;top:442px;font-size:12px;font-weight:bold;color:#0a0a0a;line-height:12px;white-space:pre;letter-spacing:0.000px;">Map #7</div><div class="a" style="left:115.90px;top:459px;font-size:12px;font-weight:bold;color:#0a0a0a;line-height:12px;white-space:pre;letter-spacing:0.000px;">Lux&#160;&#160;Less...</div><div class="a" style="left:88.10px;top:480px;font-size:10px;font-weight:normal;color:#080808;line-height:12px;white-space:pre;letter-spacing:0.221px;">Texure 1</div><div class="a" style="left:88.10px;top:500px;font-size:10px;font-weight:normal;color:#080808;line-height:12px;white-space:pre;letter-spacing:0.221px;">Texure 2</div><svg style="position:absolute;left:245px;top:424px" width="177" height="113"><path d="M150,34.0 L154,34.0 Q159.5,34.0 159.5,39.5 L159.5,74.5 Q159.5,80.0 154,80.0 L150,80.0 Z" fill="#55b27b" stroke="#22262a" stroke-width="1.7"/><defs><clipPath id="c255_434"><path d="M12,16.5 Q12,12 16.5,12 L146.5,12 Q151,12 151,16.5 L151,94.3 L144.3,101 L15,101 Q12,101 12,98 Z"/></clipPath><linearGradient id="gc255_434" x1="0" y1="0" x2="0" y2="1"><stop offset="0" stop-color="#519c6d"/><stop offset="1" stop-color="#71b58c"/></linearGradient><linearGradient id="fc255_434" x1="0" y1="0" x2="0" y2="1"><stop offset="0" stop-color="#99a1a9"/><stop offset="1" stop-color="#b5bdc5"/></linearGradient></defs><path d="M10,16.5 Q10,10 16.5,10 L146.5,10 Q153,10 153,16.5 L153,95.5 L145.5,103 L14.5,103 Q10,103 10,98.5 Z" fill="#22262a"/><g clip-path="url(#c255_434)"><rect x="12" y="12" width="139" height="38" fill="url(#gc255_434)"/><path d="M12.5,50 L12.5,16.5 Q12.5,12.5 16.5,12.5 L146.5,12.5 Q150.5,12.5 150.5,16.5 L150.5,50" fill="none" stroke="#7bc499" stroke-width="1"/><rect x="12" y="50" width="139" height="1" fill="#3b4a44"/><rect x="12" y="51" width="139" height="41" fill="#b9c1c9"/><rect x="15" y="70" width="133" height="1" fill="#7d848b"/><rect x="15" y="71" width="133" height="1" fill="#dfe4ea"/><rect x="12" y="91" width="139" height="1" fill="#767d84"/><rect x="12" y="92" width="139" height="2" fill="#c6cdd4"/><rect x="12" y="94" width="139" height="7" fill="url(#fc255_434)"/></g><line x1="136" y1="98" x2="141" y2="93" stroke="#1c1f22" stroke-width="1" stroke-dasharray="1 0.5" opacity="0.35"/><line x1="139" y1="98" x2="144" y2="93" stroke="#1c1f22" stroke-width="1" stroke-dasharray="1 0.5" opacity="0.35"/><line x1="142" y1="98" x2="147" y2="93" stroke="#1c1f22" stroke-width="1" stroke-dasharray="1 0.5" opacity="0.9"/><line x1="145" y1="98" x2="150" y2="93" stroke="#1c1f22" stroke-width="1" stroke-dasharray="1 0.5" opacity="0.9"/><rect x="15" y="16" width="32" height="31" fill="#808080"/><rect x="133" y="20" width="9" height="3" fill="#236e40"/><circle cx="11" cy="61.8" r="6" fill="#c0cad7" stroke="#3a424e" stroke-width="1.1"/><circle cx="11" cy="80.8" r="6" fill="#c0cad7" stroke="#3a424e" stroke-width="1.1"/><circle cx="161" cy="56.7" r="6" fill="#c0cad7" stroke="#3a424e" stroke-width="1.1"/></svg><div class="a" style="left:295.00px;top:442px;font-size:12px;font-weight:bold;color:#0a0a0a;line-height:12px;white-space:pre;letter-spacing:0.000px;">Map #8</div><div class="a" style="left:295.90px;top:459px;font-size:12px;font-weight:bold;color:#0a0a0a;line-height:12px;white-space:pre;letter-spacing:0.000px;">Lux Mix</div><div class="a" style="left:268.10px;top:480px;font-size:10px;font-weight:normal;color:#080808;line-height:12px;white-space:pre;letter-spacing:0.221px;">Texure 1</div><div class="a" style="left:268.10px;top:500px;font-size:10px;font-weight:normal;color:#080808;line-height:12px;white-space:pre;letter-spacing:0.221px;">Texure 2</div><svg style="position:absolute;left:65px;top:544px" width="217" height="113"><path d="M190,34.0 L194,34.0 Q199.5,34.0 199.5,39.5 L199.5,74.5 Q199.5,80.0 194,80.0 L190,80.0 Z" fill="#55b27b" stroke="#22262a" stroke-width="1.7"/><defs><clipPath id="c75_554"><path d="M12,16.5 Q12,12 16.5,12 L186.5,12 Q191,12 191,16.5 L191,94.3 L184.3,101 L15,101 Q12,101 12,98 Z"/></clipPath><linearGradient id="gc75_554" x1="0" y1="0" x2="0" y2="1"><stop offset="0" stop-color="#519c6d"/><stop offset="1" stop-color="#71b58c"/></linearGradient><linearGradient id="fc75_554" x1="0" y1="0" x2="0" y2="1"><stop offset="0" stop-color="#99a1a9"/><stop offset="1" stop-color="#b5bdc5"/></linearGradient></defs><path d="M10,16.5 Q10,10 16.5,10 L186.5,10 Q193,10 193,16.5 L193,95.5 L185.5,103 L14.5,103 Q10,103 10,98.5 Z" fill="#22262a"/><g clip-path="url(#c75_554)"><rect x="12" y="12" width="179" height="38" fill="url(#gc75_554)"/><path d="M12.5,50 L12.5,16.5 Q12.5,12.5 16.5,12.5 L186.5,12.5 Q190.5,12.5 190.5,16.5 L190.5,50" fill="none" stroke="#7bc499" stroke-width="1"/><rect x="12" y="50" width="179" height="1" fill="#3b4a44"/><rect x="12" y="51" width="179" height="41" fill="#b9c1c9"/><rect x="15" y="70" width="173" height="1" fill="#7d848b"/><rect x="15" y="71" width="173" height="1" fill="#dfe4ea"/><rect x="12" y="91" width="179" height="1" fill="#767d84"/><rect x="12" y="92" width="179" height="2" fill="#c6cdd4"/><rect x="12" y="94" width="179" height="7" fill="url(#fc75_554)"/></g><line x1="176" y1="98" x2="181" y2="93" stroke="#1c1f22" stroke-width="1" stroke-dasharray="1 0.5" opacity="0.35"/><line x1="179" y1="98" x2="184" y2="93" stroke="#1c1f22" stroke-width="1" stroke-dasharray="1 0.5" opacity="0.35"/><line x1="182" y1="98" x2="187" y2="93" stroke="#1c1f22" stroke-width="1" stroke-dasharray="1 0.5" opacity="0.9"/><line x1="185" y1="98" x2="190" y2="93" stroke="#1c1f22" stroke-width="1" stroke-dasharray="1 0.5" opacity="0.9"/><rect x="15" y="16" width="32" height="31" fill="#808080"/><rect x="173" y="20" width="9" height="3" fill="#236e40"/><circle cx="11" cy="61.8" r="6" fill="#c0cad7" stroke="#3a424e" stroke-width="1.1"/><circle cx="11" cy="80.8" r="6" fill="#c0cad7" stroke="#3a424e" stroke-width="1.1"/><circle cx="201" cy="56.7" r="6" fill="#c0cad7" stroke="#3a424e" stroke-width="1.1"/></svg><div class="a" style="left:115.00px;top:562px;font-size:12px;font-weight:bold;color:#0a0a0a;line-height:12px;white-space:pre;letter-spacing:0.000px;">Map #12</div><div class="a" style="left:115.90px;top:579px;font-size:12px;font-weight:bold;color:#0a0a0a;line-height:12px;white-space:pre;letter-spacing:0.000px;">Lux Checker</div><div class="a" style="left:88.10px;top:600px;font-size:10px;font-weight:normal;color:#080808;line-height:12px;white-space:pre;letter-spacing:0.221px;">Texure 1</div><div class="a" style="left:88.10px;top:620px;font-size:10px;font-weight:normal;color:#080808;line-height:12px;white-space:pre;letter-spacing:0.221px;">Texure 2</div><svg style="position:absolute;left:305px;top:544px" width="237" height="113"><path d="M210,34.0 L214,34.0 Q219.5,34.0 219.5,39.5 L219.5,74.5 Q219.5,80.0 214,80.0 L210,80.0 Z" fill="#55b27b" stroke="#22262a" stroke-width="1.7"/><defs><clipPath id="c315_554"><path d="M12,16.5 Q12,12 16.5,12 L206.5,12 Q211,12 211,16.5 L211,94.3 L204.3,101 L15,101 Q12,101 12,98 Z"/></clipPath><linearGradient id="gc315_554" x1="0" y1="0" x2="0" y2="1"><stop offset="0" stop-color="#519c6d"/><stop offset="1" stop-color="#71b58c"/></linearGradient><linearGradient id="fc315_554" x1="0" y1="0" x2="0" y2="1"><stop offset="0" stop-color="#99a1a9"/><stop offset="1" stop-color="#b5bdc5"/></linearGradient></defs><path d="M10,16.5 Q10,10 16.5,10 L206.5,10 Q213,10 213,16.5 L213,95.5 L205.5,103 L14.5,103 Q10,103 10,98.5 Z" fill="#22262a"/><g clip-path="url(#c315_554)"><rect x="12" y="12" width="199" height="38" fill="url(#gc315_554)"/><path d="M12.5,50 L12.5,16.5 Q12.5,12.5 16.5,12.5 L206.5,12.5 Q210.5,12.5 210.5,16.5 L210.5,50" fill="none" stroke="#7bc499" stroke-width="1"/><rect x="12" y="50" width="199" height="1" fill="#3b4a44"/><rect x="12" y="51" width="199" height="41" fill="#b9c1c9"/><rect x="15" y="70" width="193" height="1" fill="#7d848b"/><rect x="15" y="71" width="193" height="1" fill="#dfe4ea"/><rect x="12" y="91" width="199" height="1" fill="#767d84"/><rect x="12" y="92" width="199" height="2" fill="#c6cdd4"/><rect x="12" y="94" width="199" height="7" fill="url(#fc315_554)"/></g><line x1="196" y1="98" x2="201" y2="93" stroke="#1c1f22" stroke-width="1" stroke-dasharray="1 0.5" opacity="0.35"/><line x1="199" y1="98" x2="204" y2="93" stroke="#1c1f22" stroke-width="1" stroke-dasharray="1 0.5" opacity="0.35"/><line x1="202" y1="98" x2="207" y2="93" stroke="#1c1f22" stroke-width="1" stroke-dasharray="1 0.5" opacity="0.9"/><line x1="205" y1="98" x2="210" y2="93" stroke="#1c1f22" stroke-width="1" stroke-dasharray="1 0.5" opacity="0.9"/><rect x="15" y="16" width="32" height="31" fill="#000000"/><rect x="193" y="20" width="9" height="3" fill="#236e40"/><circle cx="11" cy="61.8" r="6" fill="#c0cad7" stroke="#3a424e" stroke-width="1.1"/><circle cx="11" cy="80.8" r="6" fill="#c0cad7" stroke="#3a424e" stroke-width="1.1"/><circle cx="221" cy="56.7" r="6" fill="#c0cad7" stroke="#3a424e" stroke-width="1.1"/></svg><div class="a" style="left:355.00px;top:562px;font-size:12px;font-weight:bold;color:#0a0a0a;line-height:12px;white-space:pre;letter-spacing:0.000px;">Map #13</div><div class="a" style="left:355.90px;top:579px;font-size:12px;font-weight:bold;color:#0a0a0a;line-height:12px;white-space:pre;letter-spacing:0.000px;">Lux Checker 3d</div><div class="a" style="left:328.10px;top:600px;font-size:10px;font-weight:normal;color:#080808;line-height:12px;white-space:pre;letter-spacing:0.221px;">Texure 1</div><div class="a" style="left:328.10px;top:620px;font-size:10px;font-weight:normal;color:#080808;line-height:12px;white-space:pre;letter-spacing:0.221px;">Texure 2</div><div class="a" style="left:642px;top:0;width:1px;height:728px;background:#252525"></div><div class="a" style="left:643px;top:0;width:4px;height:728px;background:#474747"></div><div class="a" style="left:647px;top:0;width:1px;height:728px;background:#0a0a0a"></div><div class="a" style="left:648px;top:0;width:337px;height:728px;background:#444444"></div><svg class="a" style="left:648px;top:0" width="337" height="130"><rect x="104.3" y="0" width="2" height="125" fill="#7f3030"/><rect x="226.3" y="0" width="2" height="125" fill="#7f3030"/><rect x="124" y="12" width="31" height="15" fill="#4eab74"/><rect x="156" y="12" width="31" height="15" fill="#4eab74"/><rect x="188" y="12" width="31" height="17" fill="#4eab74"/><rect x="124" y="28" width="31" height="17" fill="#4eab74"/><rect x="156" y="29" width="31" height="17" fill="#4eab74"/><rect x="188" y="33" width="31" height="18" fill="#4eab74"/><rect x="124" y="47" width="31" height="18" fill="#4eab74"/><rect x="156" y="47" width="31" height="18" fill="#4eab74"/><rect x="188" y="54" width="31" height="18" fill="#4eab74"/><rect x="124" y="68" width="31" height="18" fill="#4eab74"/><rect x="156" y="68" width="31" height="18" fill="#4eab74"/><rect x="124" y="90" width="38" height="17" fill="#4eab74"/><rect x="167" y="90" width="41" height="17" fill="#4eab74"/><rect x="155" y="12" width="1" height="74" fill="#2f6446"/><rect x="187" y="12" width="1" height="74" fill="#2f6446"/><rect x="124.5" y="28.5" width="31" height="16" fill="#338955" stroke="#ffffff" stroke-width="1.1"/><rect x="121.5" y="26.5" width="36" height="20" fill="none" stroke="#e0e0e0" stroke-width="1" stroke-dasharray="2 1.5"/><rect x="0" y="125" width="337" height="1" fill="#1a1a1a"/></svg><div class="a" style="left:648px;top:126px;width:337px;height:4px;background:#494949"></div><div class="a" style="left:648px;top:130px;width:337px;height:2px;background:#111"></div><div class="a" style="left:648px;top:132px;width:337px;height:1px;background:#b8b8b8"></div><div class="a" style="left:648px;top:133px;width:337px;height:17px;background:linear-gradient(#575757,#3a3a3a)"></div><div class="a" style="left:648px;top:150px;width:337px;height:1px;background:#1c1c1c"></div><div class="a" style="left:648px;top:132px;width:1px;height:18px;background:#8a8a8a"></div><div class="a" style="left:655.00px;top:136px;font-size:12px;font-weight:bold;color:#f4f4f4;line-height:12px;white-space:pre;letter-spacing:0.182px;">Map #3  ( Lux Clamp )</div><svg class="a" style="left:974px;top:136px" width="11" height="13"><path d="M3,3.5 L9.5,9.5 M9.5,3.5 L3,9.5" stroke="#d8d8d8" stroke-width="3.6" opacity="0.55"/><path d="M3.2,3.7 L9.3,9.3 M9.3,3.7 L3.2,9.3" stroke="#000" stroke-width="2.1"/></svg><div class="a" style="left:654px;top:156px;width:330px;height:17px;background:#636363"></div><div class="a" style="left:655.70px;top:157px;font-size:11px;font-weight:normal;color:#c4c4c4;line-height:12px;white-space:pre;letter-spacing:0.382px;">Map #3</div><div class="a" style="left:980px;top:175px;width:1px;height:553px;background:#3a3a3a"></div><div class="a" style="left:650px;top:294px;width:330px;height:6px;background:#3e3e3e"></div><div class="a" style="left:650px;top:495px;width:330px;height:6px;background:#3e3e3e"></div><div class="a" style="left:650px;top:180px;width:330px;height:115px;background:#515151;border-radius:3px"></div><div class="rh" style="top:180px"><svg class="a" style="left:6px;top:6px" width="6" height="6"><path d="M0.3,0.7 L5.7,0.7 L3,4.5 Z" fill="#b0b0b0"/></svg><svg class="a" style="left:317px;top:6px" width="6" height="6"><rect x="0.0" y="0" width="1.2" height="1.2" fill="#a0a0a0"/><rect x="0.0" y="2" width="1.2" height="1.2" fill="#a0a0a0"/><rect x="0.0" y="4" width="1.2" height="1.2" fill="#a0a0a0"/><rect x="2.0" y="0" width="1.2" height="1.2" fill="#a0a0a0"/><rect x="2.0" y="2" width="1.2" height="1.2" fill="#a0a0a0"/><rect x="2.0" y="4" width="1.2" height="1.2" fill="#a0a0a0"/><rect x="4.0" y="0" width="1.2" height="1.2" fill="#a0a0a0"/><rect x="4.0" y="2" width="1.2" height="1.2" fill="#a0a0a0"/><rect x="4.0" y="4" width="1.2" height="1.2" fill="#a0a0a0"/></svg></div><div class="a" style="left:668.60px;top:184px;font-size:11.5px;font-weight:bold;color:#f4f4f4;line-height:12px;white-space:pre;letter-spacing:0.300px;">Clamp Parameters</div><div class="a" style="left:671.30px;top:226px;font-size:11px;font-weight:normal;color:#ededed;line-height:12px;white-space:pre;letter-spacing:0.284px;">Texture 1 :</div><div class="sp" style="left:748px;top:224px;width:46px;height:16px"><svg class="a" style="left:37.5px;top:3.0px" width="7" height="10"><path d="M0.6,4.1 L5.6,4.1 L3.1,0.8 Z M0.6,5.9 L5.6,5.9 L3.1,9.2 Z" fill="#d8d8d8"/></svg></div><div class="a" style="left:751.40px;top:225px;font-size:11px;font-weight:normal;color:#e0e0e0;line-height:12px;white-space:pre;letter-spacing:0.000px;">1.0</div><div class="a" style="left:808px;top:223px;width:145px;height:19px;background:#646464;border-radius:3px"></div><div class="a" style="left:861.00px;top:227px;font-size:11px;font-weight:normal;color:#dcdcdc;line-height:12px;white-space:pre;letter-spacing:-0.350px;">No Map</div><div class="a" style="left:698.90px;top:257px;font-size:11px;font-weight:normal;color:#ededed;line-height:12px;white-space:pre;letter-spacing:-0.209px;">Min :</div><div class="sp" style="left:748px;top:255px;width:46px;height:16px"><svg class="a" style="left:37.5px;top:3.0px" width="7" height="10"><path d="M0.6,4.1 L5.6,4.1 L3.1,0.8 Z M0.6,5.9 L5.6,5.9 L3.1,9.2 Z" fill="#d8d8d8"/></svg></div><div class="a" style="left:751.40px;top:256px;font-size:11px;font-weight:normal;color:#e0e0e0;line-height:12px;white-space:pre;letter-spacing:0.000px;">1.0</div><div class="a" style="left:868.90px;top:257px;font-size:11px;font-weight:normal;color:#ededed;line-height:12px;white-space:pre;letter-spacing:0.052px;">Max :</div><div class="sp" style="left:905px;top:255px;width:46px;height:16px"><svg class="a" style="left:37.5px;top:3.0px" width="7" height="10"><path d="M0.6,4.1 L5.6,4.1 L3.1,0.8 Z M0.6,5.9 L5.6,5.9 L3.1,9.2 Z" fill="#d8d8d8"/></svg></div><div class="a" style="left:908.40px;top:256px;font-size:11px;font-weight:normal;color:#e0e0e0;line-height:12px;white-space:pre;letter-spacing:0.000px;">1.0</div><div class="a" style="left:650px;top:299px;width:330px;height:197px;background:#515151;border-radius:3px"></div><div class="rh" style="top:299px"><svg class="a" style="left:6px;top:6px" width="6" height="6"><path d="M0.3,0.7 L5.7,0.7 L3,4.5 Z" fill="#b0b0b0"/></svg><svg class="a" style="left:317px;top:6px" width="6" height="6"><rect x="0.0" y="0" width="1.2" height="1.2" fill="#a0a0a0"/><rect x="0.0" y="2" width="1.2" height="1.2" fill="#a0a0a0"/><rect x="0.0" y="4" width="1.2" height="1.2" fill="#a0a0a0"/><rect x="2.0" y="0" width="1.2" height="1.2" fill="#a0a0a0"/><rect x="2.0" y="2" width="1.2" height="1.2" fill="#a0a0a0"/><rect x="2.0" y="4" width="1.2" height="1.2" fill="#a0a0a0"/><rect x="4.0" y="0" width="1.2" height="1.2" fill="#a0a0a0"/><rect x="4.0" y="2" width="1.2" height="1.2" fill="#a0a0a0"/><rect x="4.0" y="4" width="1.2" height="1.2" fill="#a0a0a0"/></svg></div><div class="a" style="left:668.60px;top:303px;font-size:11.5px;font-weight:bold;color:#f4f4f4;line-height:12px;white-space:pre;letter-spacing:0.161px;">Coordinates</div><svg class="a" style="left:657.6px;top:328.6px" width="14" height="14"><circle cx="7" cy="7" r="6" fill="#464646"/><circle cx="7" cy="7" r="4.9" fill="#5a5a5a"/><circle cx="7" cy="7" r="3.4" fill="#e6e6e6"/></svg><div class="a" style="left:676.70px;top:331px;font-size:11px;font-weight:normal;color:#ededed;line-height:12px;white-space:pre;letter-spacing:0.238px;">Texture</div><svg class="a" style="left:717.5px;top:328.6px" width="14" height="14"><circle cx="7" cy="7" r="6" fill="#4a4a4a"/><circle cx="7" cy="7" r="5.2" fill="#5d5d5d"/></svg><div class="a" style="left:735.90px;top:331px;font-size:11px;font-weight:normal;color:#ededed;line-height:12px;white-space:pre;letter-spacing:-0.150px;">Environ</div><div class="a" style="left:783.30px;top:330px;font-size:11px;font-weight:normal;color:#ededed;line-height:12px;white-space:pre;letter-spacing:-0.236px;">Mapping:</div><div class="a" style="left:833px;top:326px;width:138px;height:19px;background:#5f5f5f"></div><div class="a" style="left:837.00px;top:330px;font-size:11px;font-weight:normal;color:#cacaca;line-height:12px;white-space:pre;letter-spacing:-0.254px;">Explicit Map Channel</div><div class="a" style="left:950px;top:328px;width:2px;height:15px;background:#3a3a3a"></div><svg class="a" style="left:958px;top:333px" width="7" height="6"><path d="M0,0.5 L7,0.5 L3.5,4.5 Z" fill="#d0d0d0"/></svg><div class="a" style="left:658px;top:353px;width:11px;height:11px;background:#585858;border:1px solid #4c4c4c"><svg class="a" style="left:0px;top:0px" width="9" height="9"><path d="M1.3,4.6 L3.4,7 L8,1.8" stroke="#8c8c8c" stroke-width="1.9" fill="none"/></svg></div><div class="a" style="left:670.70px;top:354px;font-size:11px;font-weight:normal;color:#8a8a8a;line-height:12px;white-space:pre;letter-spacing:-0.338px;">Show Map on Back</div><div class="a" style="left:835.90px;top:352px;font-size:11px;font-weight:normal;color:#ededed;line-height:12px;white-space:pre;letter-spacing:-0.254px;">Map Channel:</div><div class="sp" style="left:907px;top:352px;width:58px;height:14px"><svg class="a" style="left:49.5px;top:2.0px" width="7" height="10"><path d="M0.6,4.1 L5.6,4.1 L3.1,0.8 Z M0.6,5.9 L5.6,5.9 L3.1,9.2 Z" fill="#d8d8d8"/></svg></div><div class="a" style="left:910.40px;top:353px;font-size:11px;font-weight:normal;color:#e0e0e0;line-height:12px;white-space:pre;letter-spacing:0.000px;">1</div><div class="a" style="left:658px;top:370px;width:11px;height:11px;background:#636363;border:1px solid #4c4c4c"></div><div class="a" style="left:670.70px;top:371px;font-size:11px;font-weight:normal;color:#ededed;line-height:12px;white-space:pre;letter-spacing:-0.284px;">Use Real-World Scale</div><div class="a" style="left:711.20px;top:386px;font-size:11px;font-weight:normal;color:#ededed;line-height:12px;white-space:pre;letter-spacing:0.571px;">Offset</div><div class="a" style="left:782.50px;top:386px;font-size:11px;font-weight:normal;color:#ededed;line-height:12px;white-space:pre;letter-spacing:-0.350px;">Tiling</div><div class="a" style="left:833.90px;top:386px;font-size:11px;font-weight:normal;color:#ededed;line-height:12px;white-space:pre;letter-spacing:-0.229px;">Mirror Tile</div><div class="a" style="left:915.60px;top:386px;font-size:11px;font-weight:normal;color:#ededed;line-height:12px;white-space:pre;letter-spacing:-0.350px;">Angle</div><div class="a" style="left:687.80px;top:400px;font-size:11px;font-weight:normal;color:#ededed;line-height:12px;white-space:pre;letter-spacing:0.500px;">U:</div><div class="sp" style="left:703px;top:400px;width:58px;height:14px"><svg class="a" style="left:49.5px;top:2.0px" width="7" height="10"><path d="M0.6,4.1 L5.6,4.1 L3.1,0.8 Z M0.6,5.9 L5.6,5.9 L3.1,9.2 Z" fill="#d8d8d8"/></svg></div><div class="a" style="left:706.40px;top:401px;font-size:11px;font-weight:normal;color:#e0e0e0;line-height:12px;white-space:pre;letter-spacing:0.000px;">0.0</div><div class="sp" style="left:773px;top:400px;width:58px;height:14px"><svg class="a" style="left:49.5px;top:2.0px" width="7" height="10"><path d="M0.6,4.1 L5.6,4.1 L3.1,0.8 Z M0.6,5.9 L5.6,5.9 L3.1,9.2 Z" fill="#d8d8d8"/></svg></div><div class="a" style="left:776.40px;top:401px;font-size:11px;font-weight:normal;color:#e0e0e0;line-height:12px;white-space:pre;letter-spacing:0.000px;">1.0</div><div class="a" style="left:844px;top:401px;width:11px;height:11px;background:#636363;border:1px solid #4c4c4c"></div><div class="a" style="left:868px;top:401px;width:11px;height:11px;background:#636363;border:1px solid #4c4c4c"><svg class="a" style="left:0px;top:0px" width="9" height="9"><path d="M1.3,4.6 L3.4,7 L8,1.8" stroke="#eeeeee" stroke-width="1.9" fill="none"/></svg></div><div class="a" style="left:687.80px;top:420px;font-size:11px;font-weight:normal;color:#ededed;line-height:12px;white-space:pre;letter-spacing:1.200px;">V:</div><div class="sp" style="left:703px;top:420px;width:58px;height:14px"><svg class="a" style="left:49.5px;top:2.0px" width="7" height="10"><path d="M0.6,4.1 L5.6,4.1 L3.1,0.8 Z M0.6,5.9 L5.6,5.9 L3.1,9.2 Z" fill="#d8d8d8"/></svg></div><div class="a" style="left:706.40px;top:421px;font-size:11px;font-weight:normal;color:#e0e0e0;line-height:12px;white-space:pre;letter-spacing:0.000px;">0.0</div><div class="sp" style="left:773px;top:420px;width:58px;height:14px"><svg class="a" style="left:49.5px;top:2.0px" width="7" height="10"><path d="M0.6,4.1 L5.6,4.1 L3.1,0.8 Z M0.6,5.9 L5.6,5.9 L3.1,9.2 Z" fill="#d8d8d8"/></svg></div><div class="a" style="left:776.40px;top:421px;font-size:11px;font-weight:normal;color:#e0e0e0;line-height:12px;white-space:pre;letter-spacing:0.000px;">1.0</div><div class="a" style="left:844px;top:421px;width:11px;height:11px;background:#636363;border:1px solid #4c4c4c"></div><div class="a" style="left:868px;top:421px;width:11px;height:11px;background:#636363;border:1px solid #4c4c4c"><svg class="a" style="left:0px;top:0px" width="9" height="9"><path d="M1.3,4.6 L3.4,7 L8,1.8" stroke="#eeeeee" stroke-width="1.9" fill="none"/></svg></div><div class="a" style="left:891.40px;top:400px;font-size:11px;font-weight:normal;color:#ededed;line-height:12px;white-space:pre;letter-spacing:0.600px;">U:</div><div class="sp" style="left:907px;top:400px;width:58px;height:14px"><svg class="a" style="left:49.5px;top:2.0px" width="7" height="10"><path d="M0.6,4.1 L5.6,4.1 L3.1,0.8 Z M0.6,5.9 L5.6,5.9 L3.1,9.2 Z" fill="#d8d8d8"/></svg></div><div class="a" style="left:910.40px;top:401px;font-size:11px;font-weight:normal;color:#e0e0e0;line-height:12px;white-space:pre;letter-spacing:0.000px;">0.0</div><div class="a" style="left:891.40px;top:420px;font-size:11px;font-weight:normal;color:#ededed;line-height:12px;white-space:pre;letter-spacing:1.200px;">V:</div><div class="sp" style="left:907px;top:420px;width:58px;height:14px"><svg class="a" style="left:49.5px;top:2.0px" width="7" height="10"><path d="M0.6,4.1 L5.6,4.1 L3.1,0.8 Z M0.6,5.9 L5.6,5.9 L3.1,9.2 Z" fill="#d8d8d8"/></svg></div><div class="a" style="left:910.40px;top:421px;font-size:11px;font-weight:normal;color:#e0e0e0;line-height:12px;white-space:pre;letter-spacing:0.000px;">0.0</div><div class="a" style="left:889.40px;top:439px;font-size:11px;font-weight:normal;color:#ededed;line-height:12px;white-space:pre;letter-spacing:0.360px;">W:</div><div class="sp" style="left:907px;top:439px;width:58px;height:14px"><svg class="a" style="left:49.5px;top:2.0px" width="7" height="10"><path d="M0.6,4.1 L5.6,4.1 L3.1,0.8 Z M0.6,5.9 L5.6,5.9 L3.1,9.2 Z" fill="#d8d8d8"/></svg></div><div class="a" style="left:910.40px;top:440px;font-size:11px;font-weight:normal;color:#e0e0e0;line-height:12px;white-space:pre;letter-spacing:0.000px;">0.0</div><svg class="a" style="left:672.2px;top:443.8px" width="14" height="14"><circle cx="7" cy="7" r="6" fill="#464646"/><circle cx="7" cy="7" r="4.9" fill="#5a5a5a"/><circle cx="7" cy="7" r="3.4" fill="#e6e6e6"/></svg><div class="a" style="left:690.80px;top:446px;font-size:11px;font-weight:normal;color:#ededed;line-height:12px;white-space:pre;letter-spacing:-0.350px;transform:scaleX(0.877);transform-origin:0 0;">UV</div><svg class="a" style="left:711.2px;top:443.8px" width="14" height="14"><circle cx="7" cy="7" r="6" fill="#4a4a4a"/><circle cx="7" cy="7" r="5.2" fill="#5d5d5d"/></svg><div class="a" style="left:730.10px;top:446px;font-size:11px;font-weight:normal;color:#ededed;line-height:12px;white-space:pre;letter-spacing:-0.350px;transform:scaleX(0.944);transform-origin:0 0;">VW</div><svg class="a" style="left:755.4px;top:443.8px" width="14" height="14"><circle cx="7" cy="7" r="6" fill="#4a4a4a"/><circle cx="7" cy="7" r="5.2" fill="#5d5d5d"/></svg><div class="a" style="left:774.20px;top:446px;font-size:11px;font-weight:normal;color:#ededed;line-height:12px;white-space:pre;letter-spacing:-0.350px;transform:scaleX(0.968);transform-origin:0 0;">WU</div><div class="a" style="left:658.80px;top:467px;font-size:11px;font-weight:normal;color:#ededed;line-height:12px;white-space:pre;letter-spacing:-0.055px;">Blur:</div><div class="sp" style="left:689px;top:467px;width:58px;height:14px"><svg class="a" style="left:49.5px;top:2.0px" width="7" height="10"><path d="M0.6,4.1 L5.6,4.1 L3.1,0.8 Z M0.6,5.9 L5.6,5.9 L3.1,9.2 Z" fill="#d8d8d8"/></svg></div><div class="a" style="left:692.40px;top:468px;font-size:11px;font-weight:normal;color:#e0e0e0;line-height:12px;white-space:pre;letter-spacing:0.000px;">1.0</div><div class="a" style="left:754.80px;top:467px;font-size:11px;font-weight:normal;color:#ededed;line-height:12px;white-space:pre;letter-spacing:0.138px;">Blur offset:</div><div class="sp" style="left:814px;top:467px;width:58px;height:14px"><svg class="a" style="left:49.5px;top:2.0px" width="7" height="10"><path d="M0.6,4.1 L5.6,4.1 L3.1,0.8 Z M0.6,5.9 L5.6,5.9 L3.1,9.2 Z" fill="#d8d8d8"/></svg></div><div class="a" style="left:817.40px;top:468px;font-size:11px;font-weight:normal;color:#e0e0e0;line-height:12px;white-space:pre;letter-spacing:0.000px;">0.0</div><div class="a" style="left:907px;top:465px;width:57px;height:18px;background:#5f5f5f;border-radius:3px"></div><div class="a" style="left:917.30px;top:468px;font-size:11px;font-weight:normal;color:#dcdcdc;line-height:12px;white-space:pre;letter-spacing:0.398px;">Rotate</div><div class="a" style="left:650px;top:500px;width:330px;height:18px;background:#525252;border-radius:3px;border-bottom:1px solid #3f3f3f"></div><div class="rh" style="top:500px"><svg class="a" style="left:6.5px;top:6.5px" width="6" height="6"><path d="M0.3,0 L4.3,2.6 L0.3,5.2 Z" fill="#bcbcbc"/></svg><svg class="a" style="left:317px;top:6px" width="6" height="6"><rect x="0.0" y="0" width="1.2" height="1.2" fill="#a0a0a0"/><rect x="0.0" y="2" width="1.2" height="1.2" fill="#a0a0a0"/><rect x="0.0" y="4" width="1.2" height="1.2" fill="#a0a0a0"/><rect x="2.0" y="0" width="1.2" height="1.2" fill="#a0a0a0"/><rect x="2.0" y="2" width="1.2" height="1.2" fill="#a0a0a0"/><rect x="2.0" y="4" width="1.2" height="1.2" fill="#a0a0a0"/><rect x="4.0" y="0" width="1.2" height="1.2" fill="#a0a0a0"/><rect x="4.0" y="2" width="1.2" height="1.2" fill="#a0a0a0"/><rect x="4.0" y="4" width="1.2" height="1.2" fill="#a0a0a0"/></svg></div><div class="a" style="left:668.60px;top:504px;font-size:11.5px;font-weight:bold;color:#f4f4f4;line-height:12px;white-space:pre;letter-spacing:-0.104px;">Noise</div>
</body></html>
